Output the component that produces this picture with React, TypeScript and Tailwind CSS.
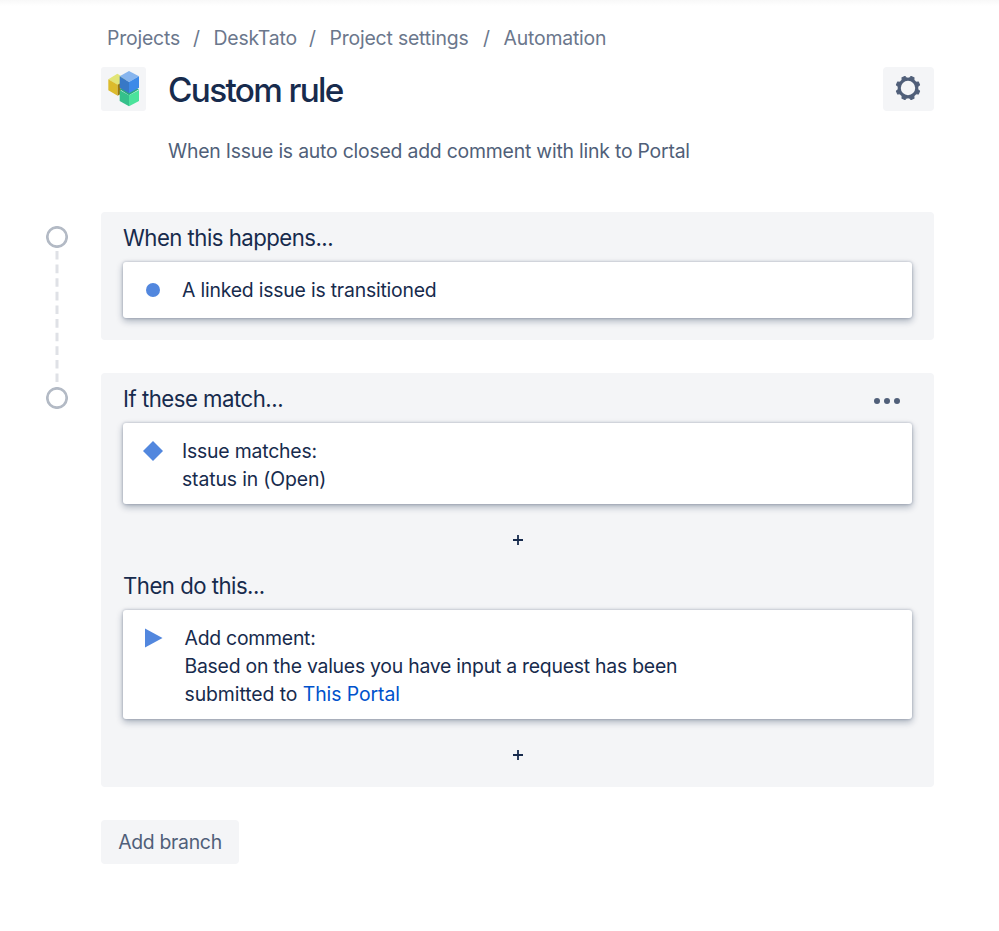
import React from 'react';

const breadcrumbs = [
  { label: 'Projects', width: 'w-[72.5px]' },
  { label: 'DeskTato', width: 'w-[82px]' },
  { label: 'Project settings', width: 'w-[140px]' },
  { label: 'Automation', width: 'w-[103px]' },
];

const RuleLogo: React.FC = () => (
  <svg viewBox="34 36 133 132" className="w-[45px] h-11">
    {/* Yellow cube */}
    <polygon points="82,56 55,73 83,90 110,73" fill="#e2e577" />
    <polygon points="55,73 83,89 83,122 55,106" fill="#dcbb2c" />
    <polygon points="83,89 92,84 92,117 83,122" fill="#9c7a0c" />
    {/* Green cube */}
    <polygon points="89,103 117,88 147,103 117,121" fill="#28a97c" />
    <polygon points="89,105 117,121 117,154 89,138" fill="#35c08b" />
    <polygon points="117,121 147,105 147,138 117,154" fill="#4be39b" />
    {/* Blue cube */}
    <polygon points="117,48 89,64 117,81 147,64" fill="#87b5ee" />
    <polygon points="89,64 117,81 117,115 89,98" fill="#3878c6" />
    <polygon points="117,81 147,64 147,98 117,115" fill="#3d8ae8" />
  </svg>
);

const GearIcon: React.FC = () => (
  <svg viewBox="-13 -13 26 26" className="w-[26px] h-[26px] mr-px mb-[2px]" stroke="#505f79" fill="none">
    <circle r="8.8" strokeWidth="3.2" />
    {[22.5, 67.5, 112.5, 157.5, 202.5, 247.5, 292.5, 337.5].map((angle) => (
      <path
        key={angle}
        d="M-2.6 -9 L-1.6 -11.9 L1.6 -11.9 L2.6 -9 Z"
        transform={`rotate(${angle})`}
        fill="#505f79"
        strokeWidth="1"
        strokeLinejoin="round"
      />
    ))}
  </svg>
);

const PlusIcon: React.FC = () => (
  <svg viewBox="0 0 10 10" className="w-2.5 h-2.5" stroke="#172b4d" strokeWidth="1.8">
    <path d="M5 0V10M0 5H10" />
  </svg>
);

const StepMarker: React.FC = () => (
  <svg viewBox="0 0 22 22" className="w-[22px] h-[22px]">
    <circle cx="11" cy="11" r="9.7" fill="#fff" stroke="#b3bac5" strokeWidth="2.7" />
  </svg>
);

const RuleCard: React.FC<{ className: string; children: React.ReactNode }> = ({ className, children }) => (
  <div
    className={`flex bg-white rounded-[3px] text-[19.4px] text-[#172b4d] shadow-[0_3px_7px_rgba(9,30,66,0.32),0_0_3px_rgba(9,30,66,0.28)] ${className}`}
  >
    {children}
  </div>
);

const App: React.FC = () => {
  return (
    <div className="w-[999px] h-[931px] overflow-hidden bg-white font-['Inter','Liberation_Sans',sans-serif] whitespace-nowrap">
      <div className="h-1.5 bg-gradient-to-b from-[#f8f8f8] to-white" />

      {/* Breadcrumbs */}
      <nav className="flex pl-[107px] pt-[18px] h-[61px] text-[19.4px] leading-7 text-[#6b778c]">
        {breadcrumbs.map((item, i) => (
          <React.Fragment key={item.label}>
            {i > 0 && <span className="w-[34px] text-center">/</span>}
            <span className={`${item.width} tracking-[-0.18px]`}>{item.label}</span>
          </React.Fragment>
        ))}
      </nav>

      {/* Header */}
      <header className="flex items-start pl-[101px] pr-[65px] h-[72px]">
        <div className="w-[45px] h-11 rounded-[3px] bg-[#f4f5f7]">
          <RuleLogo />
        </div>
        <h1 className="ml-[22px] text-[33.3px] leading-[46px] font-medium tracking-[-1.65px] text-[#172b4d]">
          Custom rule
        </h1>
        <button className="ml-auto w-[51px] h-11 rounded-[4px] bg-[#f4f5f7] flex items-center justify-center">
          <GearIcon />
        </button>
      </header>
      <p className="pl-[168px] h-[73px] text-[19.4px] leading-[25px] text-[#505f79] tracking-[-0.21px]">
        When Issue is auto closed add comment with link to Portal
      </p>

      <main className="flex pl-[46px]">
        {/* Timeline */}
        <div className="w-[22px] mr-[33px] pt-[14px] flex flex-col items-center">
          <StepMarker />
          <svg className="w-1 h-[139px]" viewBox="0 0 4 139">
            <path d="M2 3V134" stroke="#dfe1e6" strokeWidth="3" strokeDasharray="8.6 5.02" />
          </svg>
          <StepMarker />
        </div>

        <div className="w-[833px]">
          <section className="h-32 rounded-[4px] bg-[#f4f5f7] px-[22px] pt-3">
            <h2 className="h-[38px] text-[22.2px] leading-7 tracking-[-0.53px] text-[#172b4d]">When this happens...</h2>
            <RuleCard className="h-14 items-center">
              <span className="w-[14px] h-[14px] ml-[22.5px] mr-[22.5px] rounded-full bg-[#5287de]" />
              <span className="pt-0.5 tracking-[-0.2px]">A linked issue is transitioned</span>
            </RuleCard>
          </section>

          <section className="mt-[33px] h-[414px] rounded-[4px] bg-[#f4f5f7] px-[22px] pt-3">
            <div className="flex justify-between h-[38px]">
              <h2 className="text-[22.2px] leading-7 tracking-[-0.5px] text-[#172b4d]">If these match...</h2>
              <div className="flex gap-1 pt-[13px] pr-3">
                <span className="w-1.5 h-1.5 rounded-full bg-[#505f79]" />
                <span className="w-1.5 h-1.5 rounded-full bg-[#505f79]" />
                <span className="w-1.5 h-1.5 rounded-full bg-[#505f79]" />
              </div>
            </div>
            <RuleCard className="h-[81px] pt-[14px]">
              <svg viewBox="0 0 20 20" className="w-5 h-5 ml-[19.5px] mr-[19.5px] mt-1">
                <path d="M10 0L20 10L10 20L0 10Z" fill="#5287de" />
              </svg>
              <p className="leading-7 tracking-[-0.2px]">
                Issue matches:
                <br />
                <span className="tracking-[-0.13px]">status in (Open)</span>
              </p>
            </RuleCard>
            <div className="h-[68px] pt-[31px] flex justify-center">
              <PlusIcon />
            </div>
            <h2 className="h-[38px] text-[22.2px] leading-7 tracking-[-0.52px] text-[#172b4d]">Then do this...</h2>
            <RuleCard className="h-[109px] pt-[14px]">
              <svg viewBox="0 0 18 20" className="w-[18px] h-5 ml-[22px] mr-[21.5px] mt-1">
                <path d="M0 0.5L17.5 10L0 19.5Z" fill="#5287de" />
              </svg>
              <p className="leading-7 tracking-[-0.24px]">
                Add comment:
                <br />
                Based on the values you have input a request has been
                <br />
                <span className="tracking-[-0.07px]">
                  submitted to <a className="text-[#0052cc]">This Portal</a>
                </span>
              </p>
            </RuleCard>
            <div className="pt-[31px] flex justify-center">
              <PlusIcon />
            </div>
          </section>

          <button className="mt-[33px] w-[138px] h-11 pt-0.5 rounded-[4px] bg-[#f4f5f7] text-[19.4px] tracking-[-0.3px] text-[#505f79]">
            Add branch
          </button>
        </div>
      </main>
    </div>
  );
};

export default App;
